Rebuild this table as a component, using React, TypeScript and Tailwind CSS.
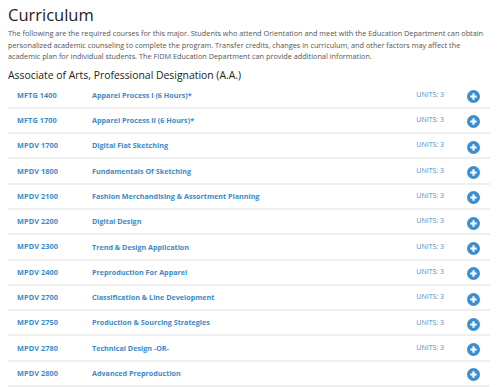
const courses = [
  { code: "MFTG 1400", title: "Apparel Process I (6 Hours)*", units: "UNITS: 3" },
  { code: "MFTG 1700", title: "Apparel Process II (6 Hours)*", units: "UNITS: 3" },
  { code: "MPDV 1700", title: "Digital Flat Sketching", units: "UNITS: 3" },
  { code: "MPDV 1800", title: "Fundamentals Of Sketching", units: "UNITS: 3" },
  { code: "MPDV 2100", title: "Fashion Merchandising & Assortment Planning", units: "UNITS: 3" },
  { code: "MPDV 2200", title: "Digital Design", units: "UNITS: 3" },
  { code: "MPDV 2300", title: "Trend & Design Application", units: "UNITS: 3" },
  { code: "MPDV 2400", title: "Preproduction For Apparel", units: "UNITS: 3" },
  { code: "MPDV 2700", title: "Classification & Line Development", units: "UNITS: 3" },
  { code: "MPDV 2750", title: "Production & Sourcing Strategies", units: "UNITS: 3" },
  { code: "MPDV 2780", title: "Technical Design -OR-", units: "UNITS: 3" },
  { code: "MPDV 2800", title: "Advanced Preproduction", units: "" },
]

function PlusIcon() {
  return (
    <svg width="13" height="13" viewBox="0 0 26 26" className="block">
      <circle cx="13" cy="13" r="13" fill="#3a8fd1" />
      <rect x="6.5" y="10.8" width="13" height="4.4" rx="1.2" fill="#fff" />
      <rect x="10.8" y="6.5" width="4.4" height="13" rx="1.2" fill="#fff" />
    </svg>
  )
}

export default function App() {
  return (
    <div className="w-[500px] h-[387px] overflow-hidden bg-white px-2 pt-[3px] font-['Open_Sans',sans-serif]">
      <h1 className="text-[16.5px] leading-[24px] text-[#222]">Curriculum</h1>
      <p className="mt-[1px] pr-[6px] text-[7.3px] leading-[11.5px] text-[#555]">
        The following are the required courses for this major. Students who attend Orientation and meet with the Education Department can obtain personalized academic counseling to complete the program. Transfer credits, changes in curriculum, and other factors may affect the academic plan for individual students. The FIDM Education Department can provide additional information.
      </p>
      <h2 className="mt-[5px] text-[10.4px] leading-[15px] text-[#222]">
        Associate of Arts, Professional Designation (A.A.)
      </h2>
      <div className="mt-[1px] mr-[2px]">
        {courses.map((c) => (
          <div
            key={c.code}
            className="grid h-[25.3px] grid-cols-[75px_1fr_auto_36px] items-center border-b-2 border-[#efefef] pl-[9px] pr-[10px]"
          >
            <span className="text-[7.3px] font-bold tracking-[0.1px] text-[#3b8bc6]">{c.code}</span>
            <span className="text-[7.2px] font-bold text-[#3b8bc6]">{c.title}</span>
            <span className="text-[7px] text-[#4a90c4]">{c.units}</span>
            <span className="flex justify-end pt-[3px]">
              <PlusIcon />
            </span>
          </div>
        ))}
      </div>
    </div>
  )
}
